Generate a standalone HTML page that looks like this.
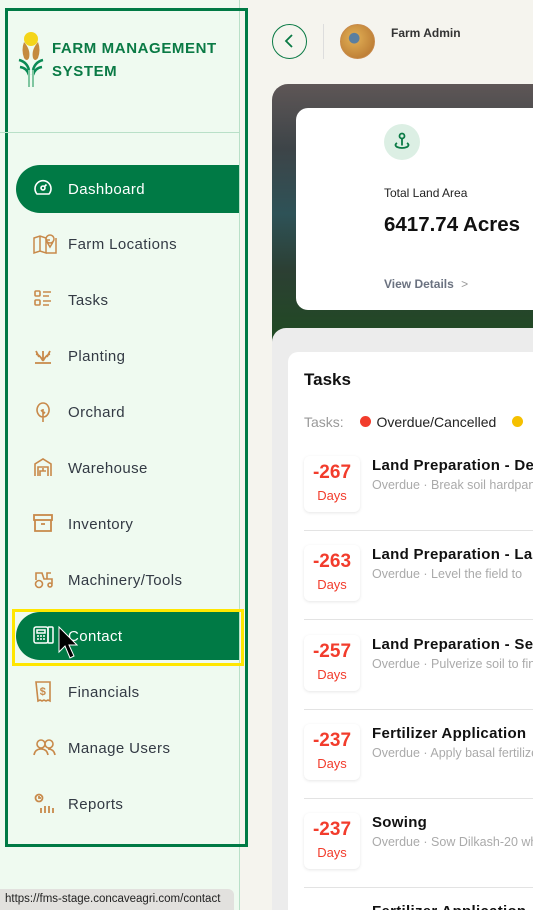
<!DOCTYPE html>
<html><head><meta charset="utf-8"><style>
*{margin:0;padding:0;box-sizing:border-box}
html{width:533px;height:910px;overflow:hidden}
body{width:533px;height:910px;overflow:hidden;background:#f5f4ee;font-family:"Liberation Sans",sans-serif;position:relative}
.abs{position:absolute}
#side{left:0;top:0;width:240px;height:910px;background:#effaf0;border-right:1px solid #b9e0c8}
#frame{left:5px;top:8px;width:243px;height:839px;border:3px solid #007a45}
.logo{left:52px;top:37px;color:#0a7a45;font-weight:bold;font-size:15px;line-height:23px;letter-spacing:.6px}
.hr{left:0;top:132px;width:240px;height:1px;background:#b9e0c8}
.nav{left:16px;width:223px;height:48px;display:flex;align-items:center;font-size:15px;letter-spacing:.4px;color:#333a44}
.nav svg{position:absolute;left:17px;top:13px}
.nav span{position:absolute;left:52px}
.act{background:#007a45;color:#fff;border-radius:24px 0 0 24px}
#ybox{left:12px;top:609px;width:232px;height:57px;border:3px solid #ffe600}
.tip{left:0;top:889px;width:234px;height:21px;background:#e2e1de;border-radius:0 6px 0 0;font-size:11.5px;color:#222;padding:4px 0 0 5px}
.back{left:272px;top:24px;width:35px;height:35px;border:1.5px solid #0a7a45;border-radius:50%}
.hero{left:272px;top:84px;width:261px;height:260px;border-radius:16px 0 0 0;background:linear-gradient(180deg,#5e5656 0%,#3d4448 25%,#2e5257 50%,#2c3f33 72%,#1f4b22 100%)}
.card{left:296px;top:108px;width:237px;height:202px;background:#fff;border-radius:12px 0 0 12px}
.panel{left:272px;top:328px;width:261px;height:582px;background:#ececec;border-radius:14px 0 0 0}
.tcard{left:288px;top:352px;width:245px;height:558px;background:#fff;border-radius:10px 0 0 0;overflow:hidden}
.row{left:16px;width:229px;height:89px}
.dbox{position:absolute;left:0;top:-10px;width:56px;height:56px;border-radius:6px;box-shadow:0 1px 3px rgba(0,0,0,.1);text-align:center;color:#f23c2c}
.dbox b{display:block;font-size:19px;margin-top:6px}
.dbox i{font-style:normal;font-size:13px;display:block;margin-top:4px}
.rt{position:absolute;left:68px;top:-9px;font-weight:bold;font-size:15px;color:#111;white-space:nowrap;letter-spacing:.3px}
.rs{position:absolute;left:68px;top:12px;font-size:12.5px;color:#aaa;white-space:nowrap}
.sep{position:absolute;left:0;top:64px;width:229px;height:1px;background:#e3e3e3}
</style></head><body>
<div id="side" class="abs"></div>
<div id="frame" class="abs"></div>
<svg class="abs" style="left:16px;top:30px" width="30" height="58" viewBox="0 0 30 58">
<circle cx="15" cy="9" r="7" fill="#f4d51a"/>
<path d="M8 12 q-3 8 0 16 q3 4 5 0 q2-8 -5-16z" fill="#c58a3e"/>
<path d="M22 12 q3 8 0 16 q-3 4 -5 0 q-2-8 5-16z" fill="#c58a3e"/>
<path d="M3 30 q8 2 10 10 M27 30 q-8 2 -10 10 M4 37 q7 1 9 8 M26 37 q-7 1 -9 8" stroke="#0a8a55" stroke-width="2.5" fill="none"/>
<path d="M13 40 v17 M17 40 v17" stroke="#7fc6a0" stroke-width="2"/>
</svg>
<div class="abs logo">FARM MANAGEMENT<br>SYSTEM</div>
<div class="abs hr"></div>

<div class="abs nav act" style="top:165px"><svg width="20" height="20" viewBox="0 0 20 20" fill="none" stroke="#fff" stroke-width="1.6"><path d="M4 16 a8 8 0 1 1 12 0z"/><circle cx="10" cy="10" r="2"/><path d="M11.5 8.5 l2-2"/></svg><span>Dashboard</span></div>
<div class="abs nav" style="top:220px"><svg width="24" height="22" viewBox="0 0 24 22" fill="none" stroke="#c8894a" stroke-width="1.5"><path d="M1 5 l6-2 6 2 v15 l-6-2 -6 2z M7 3 v15 M13 7 l4 0 M23 5 v15 l-10 0"/><circle cx="17" cy="6" r="4"/><path d="M14 9 l3 5 3-5"/></svg><span>Farm Locations</span></div>
<div class="abs nav" style="top:276px"><svg width="20" height="20" viewBox="0 0 20 20" fill="none" stroke="#c8894a" stroke-width="1.6"><rect x="2" y="2" width="5" height="5" rx="1"/><rect x="2" y="11" width="5" height="5" rx="1"/><path d="M10 3h8M10 7h6M10 12h8M10 16h6"/></svg><span>Tasks</span></div>
<div class="abs nav" style="top:332px"><svg width="20" height="20" viewBox="0 0 20 20" fill="none" stroke="#c8894a" stroke-width="1.8"><path d="M2 18h16M10 16 V6 M10 16 q-3-6 -7-7 M10 16 q3-6 7-7 M6 12 l-3-6 M14 12 l3-6"/></svg><span>Planting</span></div>
<div class="abs nav" style="top:388px"><svg width="20" height="22" viewBox="0 0 20 22" fill="none" stroke="#c8894a" stroke-width="1.6"><path d="M10 2 a6 7 0 1 0 0.1 0z M10 8v13 M10 11 l-2-2 M10 13 l2-2"/></svg><span>Orchard</span></div>
<div class="abs nav" style="top:444px"><svg width="20" height="20" viewBox="0 0 20 20" fill="none" stroke="#c8894a" stroke-width="1.6"><path d="M2 19 V7 l8-5 8 5 v12 M5 19v-9h10v9 M7 19v-5h6 M10 14v-3"/></svg><span>Warehouse</span></div>
<div class="abs nav" style="top:500px"><svg width="20" height="20" viewBox="0 0 20 20" fill="none" stroke="#c8894a" stroke-width="1.8"><rect x="1" y="2" width="18" height="5"/><path d="M2 7v11h16V7 M8 11h4"/></svg><span>Inventory</span></div>
<div class="abs nav" style="top:556px"><svg width="22" height="20" viewBox="0 0 22 20" fill="none" stroke="#c8894a" stroke-width="1.6"><circle cx="6" cy="15" r="3.5"/><circle cx="17" cy="16" r="2"/><path d="M3 11 V4 h6 l2 6 h8 v5 M14 10 V4 h4"/></svg><span>Machinery/Tools</span></div>
<div class="abs nav act" style="top:612px"><svg width="22" height="20" viewBox="0 0 22 20" fill="none" stroke="#fff" stroke-width="1.5"><rect x="1" y="2" width="14" height="16" rx="2"/><rect x="15" y="2" width="5" height="16" rx="1"/><rect x="4" y="5" width="8" height="3"/><path d="M4 11h2M7 11h2M10 11h2M4 14h2M7 14h2M10 14h2"/></svg><span>Contact</span></div>
<div class="abs nav" style="top:668px"><svg width="20" height="22" viewBox="0 0 20 22" fill="none" stroke="#c8894a" stroke-width="1.6"><path d="M3 1h14v19 l-2-1 -2 1 -2-1 -2 1 -2-1 -2 1z"/><text x="10" y="14" font-size="11" text-anchor="middle" fill="#c8894a" stroke="none" font-family="Liberation Sans" font-weight="bold">$</text></svg><span>Financials</span></div>
<div class="abs nav" style="top:724px"><svg width="24" height="20" viewBox="0 0 24 20" fill="none" stroke="#c8894a" stroke-width="1.6"><circle cx="8" cy="7" r="4"/><circle cx="16" cy="7" r="4"/><path d="M1 18 q1-6 7-6 q6 0 7 6 M15 12 q6 0 7 6"/></svg><span>Manage Users</span></div>
<div class="abs nav" style="top:780px"><svg width="22" height="22" viewBox="0 0 22 22" fill="none" stroke="#c8894a" stroke-width="1.8"><circle cx="6" cy="5" r="3.5"/><path d="M6 3v2h2 M8 20v-5 M12 20v-7 M16 20v-7 M20 20v-5"/></svg><span>Reports</span></div>
<div id="ybox" class="abs"></div>
<svg class="abs" style="left:58px;top:626px" width="20" height="36" viewBox="0 0 20 36"><path d="M1 1 L1 26 L7 20 L12 32 L16 30 L11 19 L19 19 Z" fill="#000" stroke="#fff" stroke-width="1"/></svg>
<div class="abs tip">https://fms-stage.concaveagri.com/contact</div>

<div class="abs back"><svg width="32" height="32" viewBox="0 0 32 32"><path d="M19 10 l-6 6 6 6" stroke="#0a7a45" stroke-width="1.8" fill="none"/></svg></div>
<div class="abs" style="left:323px;top:24px;width:1px;height:35px;background:#ddd"></div>
<div class="abs" style="left:340px;top:24px;width:35px;height:35px;border-radius:50%;background:radial-gradient(circle at 40% 40%,#5b7fa0 0 18%,#d9a44e 20%,#c08238 70%,#b06a2c);border:1.5px solid #c88a4a"></div>
<div class="abs" style="left:391px;top:26px;font-size:12px;color:#333;font-weight:bold">Farm Admin</div>

<div class="abs hero"></div>
<div class="abs card">
<div class="abs" style="left:88px;top:16px;width:36px;height:36px;border-radius:50%;background:#dcefe4"><svg width="36" height="36" viewBox="0 0 36 36" fill="none" stroke="#0a7a45" stroke-width="1.8"><circle cx="18" cy="12" r="2.5"/><path d="M18 14.5v7 M13 19 q-3 2 0 4 q5 2 10 0 q3-2 0-4"/></svg></div>
<div class="abs" style="left:88px;top:78px;font-size:12px;color:#222">Total Land Area</div>
<div class="abs" style="left:88px;top:105px;font-size:20.5px;font-weight:bold;color:#111">6417.74 Acres</div>
<div class="abs" style="left:88px;top:169px;font-size:12px;font-weight:bold;color:#6b7280">View Details <span style="color:#999;font-weight:normal;margin-left:4px">&gt;</span></div>
</div>
<div class="abs panel"></div>
<div class="abs tcard">
<div class="abs" style="left:16px;top:18px;font-size:17px;font-weight:bold;color:#111">Tasks</div>
<div class="abs" style="left:16px;top:62px;font-size:14px;color:#999;white-space:nowrap">Tasks: <span style="display:inline-block;width:11px;height:11px;border-radius:50%;background:#f23c2c;margin:0 2px 0 12px"></span> <span style="color:#222">Overdue/Cancelled</span> <span style="display:inline-block;width:11px;height:11px;border-radius:50%;background:#f5c000;margin-left:12px"></span></div>
<div class="abs row" style="top:114px"><div class="dbox"><b>-267</b><i>Days</i></div><div class="rt">Land Preparation - Deep</div><div class="rs">Overdue · Break soil hardpan</div><div class="sep"></div></div>
<div class="abs row" style="top:203px"><div class="dbox"><b>-263</b><i>Days</i></div><div class="rt">Land Preparation - Laser</div><div class="rs">Overdue · Level the field to</div><div class="sep"></div></div>
<div class="abs row" style="top:293px"><div class="dbox"><b>-257</b><i>Days</i></div><div class="rt">Land Preparation - Seed</div><div class="rs">Overdue · Pulverize soil to fine</div><div class="sep"></div></div>
<div class="abs row" style="top:382px"><div class="dbox"><b>-237</b><i>Days</i></div><div class="rt">Fertilizer Application</div><div class="rs">Overdue · Apply basal fertilizer</div><div class="sep"></div></div>
<div class="abs row" style="top:471px"><div class="dbox"><b>-237</b><i>Days</i></div><div class="rt">Sowing</div><div class="rs">Overdue · Sow Dilkash-20 wheat</div><div class="sep"></div></div>
<div class="abs row" style="top:560px;height:0"><div class="rt">Fertilizer Application</div></div>
</div>
</body></html>
